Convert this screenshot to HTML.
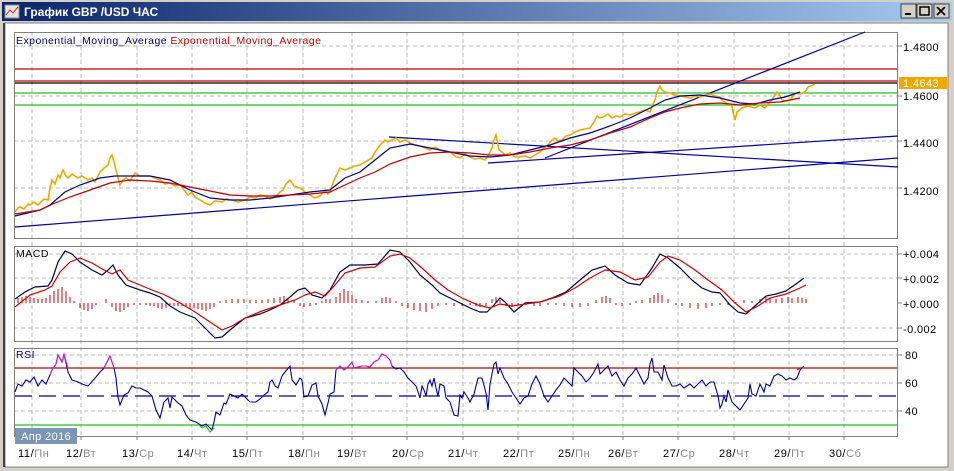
<!DOCTYPE html>
<html><head><meta charset="utf-8"><style>
body{margin:0;width:954px;height:471px;overflow:hidden;background:#d4d0c8;font-family:"Liberation Sans",sans-serif}
</style></head><body>
<svg width="954" height="471" xmlns="http://www.w3.org/2000/svg" style="position:absolute;left:0;top:0" font-family="Liberation Sans, DejaVu Sans, sans-serif">
<defs><linearGradient id="tb" x1="0" x2="1"><stop offset="0" stop-color="#0a246a"/><stop offset="1" stop-color="#a6caf0"/></linearGradient></defs>
<rect x="0" y="0" width="954" height="471" fill="#d4d0c8"/>
<rect x="2" y="2" width="950" height="19" fill="url(#tb)"/>
<rect x="5" y="5" width="14" height="13" fill="#e8e4dc" stroke="#888"/>
<path d="M6 15 L10 10 L13 13 L18 7" stroke="#c03030" fill="none"/>
<text x="24" y="16" font-size="12" font-weight="bold" fill="#fff">График GBP /USD  ЧАС</text>
<g fill="#d4d0c8" stroke="#404040"><rect x="901" y="4" width="15" height="14"/><rect x="917" y="4" width="15" height="14"/><rect x="934" y="4" width="15" height="14"/></g>
<path d="M905 14h6" stroke="#000" stroke-width="2"/><rect x="920" y="7" width="9" height="8" fill="none" stroke="#000" stroke-width="1.5"/>
<path d="M937 7l8 8M945 7l-8 8" stroke="#000" stroke-width="1.8"/>
<rect x="5" y="23" width="943" height="444" fill="#fff" stroke="#808080"/>
<line x1="4" y1="23" x2="4" y2="467" stroke="#404040" stroke-width="2"/>
<g stroke="#bbb" stroke-dasharray="4,3" fill="none">
<path d="M32 32V436M81 32V436M137 32V436M192 32V436M247 32V436M303 32V436M352 32V436M407 32V436M463 32V436M518 32V436M573 32V436M623 32V436M678 32V436M734 32V436M789 32V436M844 32V436"/>
<path d="M14 46H898M14 96H898M14 141H898M14 188H898M14 254H898M14 278H898M14 328H898M14 355H898M14 383H898M14 411H898"/>
</g>
<g fill="none" stroke="#808080"><rect x="14.5" y="32.5" width="883" height="206"/><rect x="14.5" y="246.5" width="883" height="95"/><rect x="14.5" y="348.5" width="883" height="88"/></g>
<text x="16" y="44" font-size="10.5" letter-spacing="0.45" fill="#00008b">Exponential_Moving_Average <tspan fill="#c00000">Exponential_Moving_Average</tspan></text>
<g stroke-width="1.2">
<line x1="15" y1="69" x2="897" y2="69" stroke="#c00000"/>
<line x1="15" y1="81" x2="897" y2="81" stroke="#c00000"/>
<line x1="15" y1="83" x2="897" y2="83" stroke="#000"/>
<line x1="15" y1="93" x2="897" y2="93" stroke="#20c020"/>
<line x1="15" y1="105" x2="897" y2="105" stroke="#20c020"/>
</g>
<g stroke="#0000a0" stroke-width="1.2" fill="none">
<path d="M15 227L898 158"/><path d="M389 137L898 167"/><path d="M488 163L898 136"/><path d="M545 158L865 32"/>
</g>
<polyline fill="none" stroke="#f0a800" stroke-width="1.6" points="15,212 18,208 20,207 24,209 28,204 30,205 34,202 38,205 40,203 44,199 48,200 50,188 52,180 55,184 58,175 60,178 63,170 66,176 68,178 72,174 78,178 82,176 88,180 92,178 95,182 98,176 100,172 104,168 108,165 110,158 112,155 114,162 116,170 118,178 120,185 123,180 126,178 130,181 135,173 140,176 150,176 155,178 160,180 165,184 170,183 175,186 180,185 184,190 188,195 192,192 195,197 200,200 205,203 210,205 215,201 222,202 226,199 232,200 238,202 245,200 250,197 255,198 260,195 265,196 270,199 275,197 280,192 283,190 286,184 290,180 294,186 300,188 305,192 310,195 315,198 320,196 325,190 328,194 330,192 333,183 335,178 338,172 340,168 345,170 350,168 355,166 360,165 365,162 372,158 375,152 378,148 381,144 385,140 388,142 392,140 396,138 400,142 405,140 410,143 415,145 420,146 425,148 430,150 435,147 440,150 445,151 450,152 455,156 460,158 465,154 470,157 475,159 480,158 485,160 488,156 490,152 492,148 494,140 496,135 498,145 499,150 502,152 505,155 510,153 515,157 520,157 525,156 530,158 535,155 540,152 544,148 548,145 552,140 555,138 558,141 562,140 566,136 570,135 575,132 580,130 585,129 590,128 594,122 597,116 600,118 603,117 608,114 612,118 616,116 620,117 625,114 630,115 635,113 640,112 645,110 650,112 652,106 655,100 657,92 660,86 662,90 665,92 670,93 675,95 680,96 685,97 690,98 695,96 700,97 705,95 710,94 715,96 720,97 722,100 725,102 728,104 732,106 733,112 735,120 737,112 742,108 748,106 755,108 760,105 765,108 768,104 772,100 775,95 777,92 780,96 782,100 786,101 790,100 793,96 795,93 800,94 805,92 808,87 811,86 815,84"/>
<polyline fill="none" stroke="#00008b" stroke-width="1.2" points="15,216 40,210 50,205 65,192 80,185 100,178 115,176 130,176 150,176 170,180 190,190 210,198 230,200 250,200 270,198 290,195 310,192 330,190 345,178 360,172 375,160 390,148 410,144 430,148 450,152 470,156 490,157 510,155 530,150 550,145 570,138 590,133 610,126 630,118 650,108 665,100 680,96 700,95 720,98 740,103 755,104 770,100 785,97 800,92"/>
<polyline fill="none" stroke="#c00000" stroke-width="1.2" points="15,214 40,210 55,203 70,197 90,190 110,183 130,180 150,181 170,183 190,187 210,191 230,195 250,196 270,196 290,195 310,194 330,192 345,185 360,178 375,172 390,164 410,157 430,153 450,152 470,153 490,155 510,155 530,152 550,148 570,145 590,140 610,133 630,127 650,118 665,112 680,108 700,104 720,103 740,105 760,103 780,102 800,98"/>
<rect x="899" y="77" width="48" height="12" fill="#f0a800"/>
<g font-size="11" fill="#000" letter-spacing="0.4">
<text x="903" y="51">1.4800</text><text x="903" y="87" fill="#fff">1.4643</text><text x="903" y="100">1.4600</text><text x="903" y="147">1.4400</text><text x="903" y="195">1.4200</text>
<text x="903" y="258">+0.004</text><text x="903" y="283">+0.002</text><text x="903" y="308">+0.000</text><text x="903" y="333">-0.002</text>
<text x="905" y="359">80</text><text x="905" y="387">60</text><text x="905" y="415">40</text>
</g>
<g stroke="#808080"><path d="M898 46h4M898 96h4M898 141h4M898 188h4M898 254h4M898 278h4M898 303h4M898 328h4M898 355h4M898 383h4M898 411h4"/></g>
<text x="16" y="257" font-size="10.5" letter-spacing="0.5" fill="#000">MACD</text>
<g stroke="#c00000" stroke-width="1">
<path d="M18 303v-5M22 303v-6M26 303v-7M30 303v-6M34 303v-5M38 303v-4M42 303v-4M46 303v-5M50 303v-8M54 303v-12M58 303v-14M62 303v-16M66 303v-12M70 303v-6M74 303v-2M80 303v5M84 303v7M88 303v8M92 303v6M96 303v2M106 303v-4M112 303v4M116 303v8M120 303v9M124 303v7M128 303v4M134 303v2M140 303v2M146 303v2M150 303v3M154 303v3M158 303v5M162 303v6M166 303v5M170 303v2M174 303v3M178 303v3M182 303v3M186 303v4M190 303v6M194 303v5M198 303v6M202 303v7M206 303v8M210 303v6M214 303v4M220 303v-2M226 303v-3M232 303v-4M238 303v-4M244 303v-4M250 303v-3M256 303v-3M262 303v-3M268 303v-4M274 303v-5M280 303v-6M284 303v-7M288 303v-4M294 303v-3M300 303v3M304 303v4M310 303v3M316 303v2M322 303v-2M326 303v-4M330 303v-4M336 303v-6M340 303v-10M344 303v-14M348 303v-12M352 303v-8M356 303v-4M362 303v-3M368 303v-2M376 303v-2M382 303v-5M386 303v-6M390 303v-5M396 303v-2M402 303v3M408 303v5M414 303v7M420 303v8M426 303v9M432 303v6M438 303v3M446 303v2M454 303v3M462 303v3M470 303v2M476 303v3M480 303v4M486 303v3M492 303v-4M496 303v-6M500 303v-3M506 303v3M512 303v4M518 303v2M526 303v2M534 303v3M540 303v3M548 303v2M556 303v2M564 303v3M572 303v4M580 303v4M588 303v3M596 303v-3M602 303v-6M606 303v-7M610 303v-5M616 303v2M622 303v3M630 303v2M636 303v-2M642 303v-3M650 303v-5M654 303v-8M658 303v-10M662 303v-8M668 303v-4M676 303v2M682 303v3M690 303v5M698 303v6M706 303v5M712 303v3M720 303v2M728 303v2M736 303v-1M744 303v-3M752 303v-2M760 303v-4M766 303v-6M770 303v-5M776 303v-4M782 303v-5M788 303v-6M792 303v-5M798 303v-6M802 303v-5M806 303v-4"/>
</g>
<polyline fill="none" stroke="#000050" stroke-width="1.2" points="15,299 25,292 35,287 48,286 52,280 58,262 65,251 72,254 80,262 92,270 102,275 108,270 113,265 118,275 126,285 140,290 150,293 160,297 170,306 180,312 195,318 205,328 215,338 222,337 230,330 245,318 260,314 270,310 280,305 290,297 298,290 305,288 312,295 322,298 330,290 340,272 350,265 365,265 378,264 390,250 400,252 410,262 420,275 432,285 440,293 450,298 460,303 470,308 480,312 487,312 494,305 500,298 505,302 514,312 525,303 540,302 552,298 566,292 580,280 592,270 605,266 615,275 628,283 640,285 652,268 660,254 668,258 680,268 692,280 702,288 712,292 720,293 730,305 738,312 746,314 756,305 766,296 776,294 786,291 796,284 804,278"/>
<polyline fill="none" stroke="#d00000" stroke-width="1.2" points="15,307 30,295 45,290 52,286 60,272 70,262 80,258 92,263 104,270 112,274 120,270 128,280 140,285 152,290 165,295 180,303 195,312 210,322 222,330 232,326 245,318 262,311 280,305 295,300 305,295 315,292 325,296 335,285 345,273 360,268 375,267 390,256 400,254 410,258 422,268 435,280 448,290 462,298 478,305 490,308 500,304 512,306 525,304 540,302 560,296 575,288 590,278 605,270 620,272 635,280 648,277 660,262 668,256 680,260 695,270 708,280 722,290 735,303 746,312 758,306 770,298 786,294 800,288 806,285"/>
<text x="16" y="358" font-size="10.5" letter-spacing="0.5" fill="#00008b">RSI</text>
<line x1="15" y1="368" x2="897" y2="368" stroke="#c00000" stroke-width="1.2"/>
<line x1="15" y1="425" x2="897" y2="425" stroke="#20c020" stroke-width="1.2"/>
<line x1="15" y1="396" x2="897" y2="396" stroke="#0000a0" stroke-width="1.3" stroke-dasharray="17,7"/>
<polyline fill="none" stroke="#0000a0" stroke-width="1.1" points="15,392 18,384 22,386 26,380 30,382 34,377 38,386 42,380 46,384 50,375 52,370 56,364 58,355 62,362 64,354 68,372 72,380 78,382 82,384 88,386 96,377 100,372 104,368 110,356 114,368 116,378 118,397 120,405 124,395 128,393 132,386 136,388 140,388 148,392 152,396 156,410 160,418 164,402 168,398 170,408 172,397 178,403 182,406 186,415 190,420 196,422 202,426 206,424 212,430 214,422 216,412 220,415 224,403 226,404 230,394 234,396 238,398 242,394 246,398 250,402 256,402 260,399 264,395 268,392 270,382 272,380 275,386 278,388 282,376 285,372 290,366 292,380 296,385 300,378 302,380 304,397 308,396 312,385 316,383 318,396 322,404 325,415 328,403 330,394 334,392 336,370 340,366 344,370 348,367 352,362 354,368 358,367 362,366 366,366 370,367 374,362 378,360 382,354 386,356 390,360 392,366 396,369 400,368 404,372 408,378 412,382 416,386 418,392 420,398 422,386 424,390 426,396 428,384 430,380 432,386 434,378 436,388 438,396 440,384 444,386 446,398 450,402 454,415 458,416 460,395 462,398 464,392 468,398 470,402 474,394 478,378 482,378 486,393 488,410 490,384 494,364 496,362 498,374 500,368 504,378 508,384 512,392 516,398 520,404 524,398 528,396 532,384 536,376 540,384 544,396 548,402 552,396 556,390 560,385 564,378 568,382 572,386 574,368 578,372 582,376 586,382 590,378 594,372 598,364 600,374 604,370 608,366 612,376 616,372 620,380 624,386 628,378 632,374 636,368 640,376 644,384 648,378 650,364 652,358 654,372 658,372 662,380 664,365 668,378 672,386 676,386 680,384 684,388 690,384 694,388 698,384 702,380 706,386 710,382 714,382 718,396 720,408 722,404 724,396 726,402 728,390 732,402 736,406 740,410 744,404 748,398 750,384 752,394 756,396 760,384 764,392 766,384 770,386 774,376 778,374 782,376 786,380 790,378 794,380 797,378 800,370 804,366"/>
<polyline fill="none" stroke="#d020d0" stroke-width="1.1" points="50,375 52,370 56,364 58,355 62,362 64,354 68,368"/>
<polyline fill="none" stroke="#d020d0" stroke-width="1.1" points="104,368 110,356 114,368"/>
<polyline fill="none" stroke="#d020d0" stroke-width="1.1" points="336,370 340,366 344,370 348,367 352,362 354,368 358,367 362,366 366,366 370,367 374,362 378,360 382,354 386,356 390,360 392,366"/>
<polyline fill="none" stroke="#c00000" stroke-width="1.1" points="797,370 800,368 804,368"/>
<polyline fill="none" stroke="#20c020" stroke-width="1.1" points="198,424 202,428 206,426 210,432 214,428"/>
<rect x="15" y="428" width="62" height="16" fill="#7b95b6"/>
<text x="21" y="440" font-size="11" letter-spacing="0.4" fill="#fff">Апр 2016</text>
<g stroke="#808080"><path d="M32 436v4M81 436v4M137 436v4M192 436v4M247 436v4M303 436v4M352 436v4M407 436v4M463 436v4M518 436v4M573 436v4M623 436v4M678 436v4M734 436v4M789 436v4M844 436v4"/></g>
<g font-size="11" fill="#000" letter-spacing="0.6">
<text x="18" y="457">11/<tspan fill="#888">Пн</tspan></text>
<text x="66" y="457">12/<tspan fill="#888">Вт</tspan></text>
<text x="122" y="457">13/<tspan fill="#888">Ср</tspan></text>
<text x="177" y="457">14/<tspan fill="#888">Чт</tspan></text>
<text x="232" y="457">15/<tspan fill="#888">Пт</tspan></text>
<text x="288" y="457">18/<tspan fill="#888">Пн</tspan></text>
<text x="337" y="457">19/<tspan fill="#888">Вт</tspan></text>
<text x="392" y="457">20/<tspan fill="#888">Ср</tspan></text>
<text x="448" y="457">21/<tspan fill="#888">Чт</tspan></text>
<text x="503" y="457">22/<tspan fill="#888">Пт</tspan></text>
<text x="558" y="457">25/<tspan fill="#888">Пн</tspan></text>
<text x="608" y="457">26/<tspan fill="#888">Вт</tspan></text>
<text x="663" y="457">27/<tspan fill="#888">Ср</tspan></text>
<text x="719" y="457">28/<tspan fill="#888">Чт</tspan></text>
<text x="774" y="457">29/<tspan fill="#888">Пт</tspan></text>
<text x="829" y="457">30/<tspan fill="#888">Сб</tspan></text>
</g>
</svg>
</body></html>
